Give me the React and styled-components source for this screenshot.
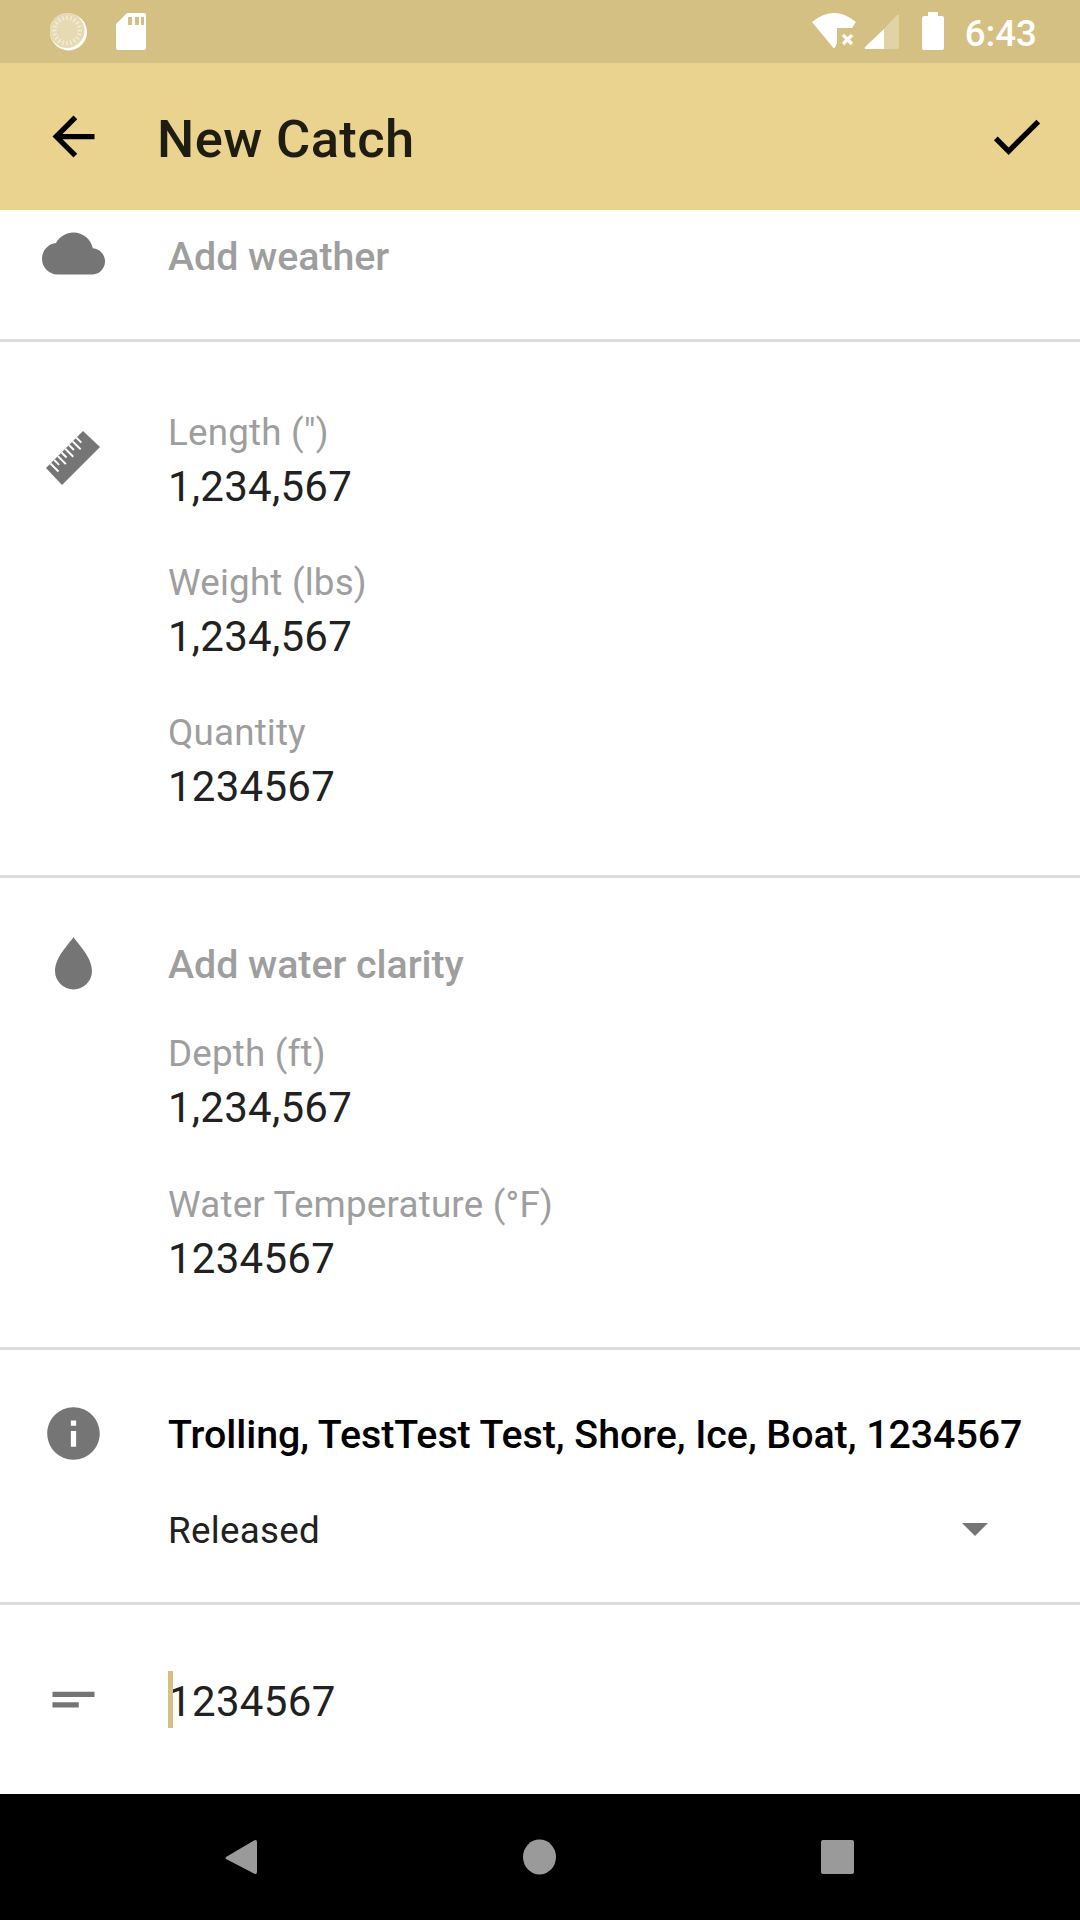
import styled, { createGlobalStyle } from "styled-components"

const GlobalStyle = createGlobalStyle`
    html, body {
        margin: 0;
        padding: 0;
        background: #fff;
    }
`

const Page = styled.div`
    width: 1080px;
    height: 1920px;
    display: flex;
    flex-direction: column;
    overflow: hidden;
    background: #fff;
    font-family: Roboto, "Liberation Sans", sans-serif;
`

const StatusBar = styled.div`
    flex: none;
    height: 63px;
    display: flex;
    justify-content: space-between;
    padding: 0 43px 0 50px;
    background: #d4c083;
`

const StatusGroup = styled.div`
    display: flex;
    align-items: center;
`

const StatusIcon = styled.svg`
    display: block;
    flex: none;
    height: 63px;
    margin-left: ${(props) => props.$gap || 0}px;
`

const Clock = styled.span`
    margin: 3px 0 0 21px;
    font-size: 36.75px;
    font-weight: 500;
    color: #fff;
`

const AppBar = styled.header`
    flex: none;
    height: 147px;
    display: flex;
    align-items: center;
    padding: 0 32px 0 42px;
    background: #ead38f;
`

const Title = styled.h1`
    flex: 1;
    margin: 4px 0 0 52px;
    font-size: 52.5px;
    font-weight: 500;
    letter-spacing: 0.4px;
    color: rgba(0, 0, 0, 0.87);
`

const Icon = styled.svg`
    display: block;
    flex: none;
    width: 63px;
    height: 63px;
    fill: ${(props) => props.$color || "#757575"};
`

const Main = styled.main`
    flex: 1;
    display: flex;
    flex-direction: column;
`

const Section = styled.section`
    display: flex;
    flex: ${(props) => (props.$fill ? 1 : "none")};
    padding-left: 42px;
    border-bottom: ${(props) => (props.$fill ? "none" : "3px solid #dcdcdc")};
`

const IconSlot = styled.div`
    flex: none;
    width: 63px;
    margin-top: ${(props) => props.$top}px;
    margin-right: 63px;
`

const Content = styled.div`
    flex: 1;
    min-width: 0;
    padding-top: ${(props) => props.$top}px;
    padding-bottom: ${(props) => props.$bottom || 0}px;
`

const AddLink = styled.div`
    font-size: 39.375px;
    line-height: 60px;
    font-weight: 500;
    letter-spacing: -0.05px;
    color: #9e9e9e;
`

const Field = styled.div`
    margin-top: ${(props) => props.$gap || 0}px;
`

const Label = styled.div`
    font-size: 36.75px;
    line-height: 48px;
    letter-spacing: 0.2px;
    color: #9e9e9e;
`

const Value = styled.div`
    font-size: 42px;
    line-height: 60px;
    letter-spacing: 0.25px;
    color: #212121;
`

const Species = styled.div`
    font-size: 39.375px;
    line-height: 60px;
    font-weight: 500;
    letter-spacing: -0.05px;
    color: #000;
    white-space: nowrap;
`

const SelectRow = styled.div`
    display: flex;
    align-items: center;
    justify-content: space-between;
    margin-top: 36px;
    padding-right: 92px;
    font-size: 36.75px;
    line-height: 60px;
    letter-spacing: 0.3px;
    color: #212121;
`

const SelectArrow = styled.div`
    width: 0;
    height: 0;
    margin-bottom: 4px;
    border-left: 13px solid transparent;
    border-right: 13px solid transparent;
    border-top: 13px solid #757575;
`

const NoteValue = styled.div`
    position: relative;
    padding-top: 2px;
    font-size: 42px;
    line-height: 57px;
    letter-spacing: 0.35px;
    color: #212121;
`

const Caret = styled.span`
    position: absolute;
    left: 0;
    top: 0;
    width: 5px;
    height: 57px;
    background: #d4c083;
`

const NavBar = styled.nav`
    flex: none;
    height: 126px;
    display: flex;
    align-items: center;
    justify-content: space-between;
    padding: 0 226px 0 225px;
    background: #000;
`

const NavIcon = styled.svg`
    display: block;
    width: 33px;
    height: 36px;
    fill: #9a9a9a;
`

const rulerTicks = [0.12, 0.22, 0.32, 0.42, 0.52, 0.62, 0.72, 0.82]

function RulerIcon() {
    return (
        <Icon viewBox="0 0 63 63">
            <polygon points="41,4 58,20 20,58 4,41" />
            {rulerTicks.map((t, index) => {
                const x = 4 + 37 * t
                const y = 41 - 37 * t
                const len = index % 2 ? 5 : 8
                return <line key={t} x1={x} y1={y} x2={x + len} y2={y + len} stroke="#fff" strokeWidth="2" />
            })}
        </Icon>
    )
}

function SunIcon() {
    const ticks = Array.from({ length: 20 }, (_, index) => index * 18)
    return (
        <StatusIcon width="37" viewBox="0 0 37 63">
            <circle cx="18.5" cy="32" r="18.5" fill="#fff" />
            <circle cx="17" cy="30.5" r="17.5" fill="#e6dab4" />
            {ticks.map((deg) => (
                <line key={deg} x1="17" y1="15.5" x2="17" y2="20" stroke="#f3ecd6" strokeWidth="1.5" transform={`rotate(${deg} 17 30.5)`} />
            ))}
        </StatusIcon>
    )
}

function SdIcon() {
    return (
        <StatusIcon $gap={29} width="30" viewBox="0 0 30 63">
            <path fill="#fff" d="M11 13h17a2 2 0 0 1 2 2v33a2 2 0 0 1-2 2H2a2 2 0 0 1-2-2V24z" />
            <path fill="#d4c083" d="M12 17h4v8h-4zM19 17h4v8h-4zM25 17h3v8h-3z" />
        </StatusIcon>
    )
}

function WifiIcon() {
    return (
        <StatusIcon width="44" viewBox="0 0 44 63">
            <path fill="#fff" d="M0 22Q22 4 44 22L40 28H25V43L23 47.5Q22 48.5 21 47.5z" />
            <path stroke="#fff" strokeWidth="3.2" d="M31 35l9 9M40 35l-9 9" />
        </StatusIcon>
    )
}

function SignalIcon() {
    return (
        <StatusIcon $gap={8} width="36" viewBox="0 0 36 63">
            <path fill="#fff" fillOpacity="0.3" d="M20 29L33 15Q35 13.5 35 16V47Q35 49 33 49H20z" />
            <path fill="#fff" d="M20 29V49H2Q0 49 1 47z" />
        </StatusIcon>
    )
}

function BatteryIcon() {
    return (
        <StatusIcon $gap={22} width="22" viewBox="0 0 22 63">
            <path fill="#fff" d="M6 12h10v4h4a2 2 0 0 1 2 2v30a2 2 0 0 1-2 2H2a2 2 0 0 1-2-2V18a2 2 0 0 1 2-2h4z" />
        </StatusIcon>
    )
}

function App() {
    return (
        <Page>
            <GlobalStyle />
            <StatusBar>
                <StatusGroup>
                    <SunIcon />
                    <SdIcon />
                </StatusGroup>
                <StatusGroup>
                    <WifiIcon />
                    <SignalIcon />
                    <BatteryIcon />
                    <Clock>6:43</Clock>
                </StatusGroup>
            </StatusBar>

            <AppBar>
                <Icon viewBox="0 0 24 24" $color="#000">
                    <path d="M20 11H7.83l5.59-5.59L12 4l-8 8 8 8 1.41-1.41L7.83 13H20v-2z" />
                </Icon>
                <Title>New Catch</Title>
                <Icon viewBox="0 0 24 24" $color="#000">
                    <path d="M9 16.17L4.83 12l-1.42 1.41L9 19 21 7l-1.41-1.41z" />
                </Icon>
            </AppBar>

            <Main>
                <Section>
                    <IconSlot $top={12}>
                        <Icon viewBox="0 0 24 24">
                            <path d="M19.35 10.04C18.67 6.59 15.64 4 12 4 9.11 4 6.6 5.64 5.35 8.04 2.34 8.36 0 10.91 0 14c0 3.31 2.69 6 6 6h13c2.76 0 5-2.24 5-5 0-2.64-2.05-4.78-4.65-4.96z" />
                        </Icon>
                    </IconSlot>
                    <Content $top={17} $bottom={52}>
                        <AddLink>Add weather</AddLink>
                    </Content>
                </Section>

                <Section>
                    <IconSlot $top={85}>
                        <RulerIcon />
                    </IconSlot>
                    <Content $top={67} $bottom={58}>
                        <Field>
                            <Label>Length (")</Label>
                            <Value>1,234,567</Value>
                        </Field>
                        <Field $gap={42}>
                            <Label>Weight (lbs)</Label>
                            <Value>1,234,567</Value>
                        </Field>
                        <Field $gap={42}>
                            <Label>Quantity</Label>
                            <Value>1234567</Value>
                        </Field>
                    </Content>
                </Section>

                <Section>
                    <IconSlot $top={55}>
                        <Icon viewBox="0 0 63 63">
                            <path d="M31.5 4C36 11 50 24 50 38A18.5 18.5 0 0 1 13 38C13 24 27 11 31.5 4Z" />
                        </Icon>
                    </IconSlot>
                    <Content $top={57} $bottom={58}>
                        <AddLink>Add water clarity</AddLink>
                        <Field $gap={35}>
                            <Label>Depth (ft)</Label>
                            <Value>1,234,567</Value>
                        </Field>
                        <Field $gap={43}>
                            <Label>Water Temperature (°F)</Label>
                            <Value>1234567</Value>
                        </Field>
                    </Content>
                </Section>

                <Section>
                    <IconSlot $top={52}>
                        <Icon viewBox="0 0 24 24">
                            <path d="M12 2C6.48 2 2 6.48 2 12s4.48 10 10 10 10-4.48 10-10S17.52 2 12 2zm1 15h-2v-6h2v6zm0-8h-2V7h2v2z" />
                        </Icon>
                    </IconSlot>
                    <Content $top={55} $bottom={41}>
                        <Species>Trolling, TestTest Test, Shore, Ice, Boat, 1234567</Species>
                        <SelectRow>
                            Released
                            <SelectArrow />
                        </SelectRow>
                    </Content>
                </Section>

                <Section $fill>
                    <IconSlot $top={63}>
                        <Icon viewBox="0 0 24 24">
                            <path d="M4 9h16v2H4zm0 4h10v2H4z" />
                        </Icon>
                    </IconSlot>
                    <Content $top={66}>
                        <NoteValue>
                            <Caret />
                            1234567
                        </NoteValue>
                    </Content>
                </Section>
            </Main>

            <NavBar>
                <NavIcon viewBox="0 0 33 36">
                    <path d="M1 18L29 1.5Q32 0 32 3V33Q32 36 29 34.500L1 20Q0 19 1 18z" />
                </NavIcon>
                <NavIcon viewBox="0 0 33 36">
                    <ellipse cx="16.500" cy="18" rx="16.500" ry="17.500" />
                </NavIcon>
                <NavIcon viewBox="0 0 33 36">
                    <rect x="0" y="1" width="33" height="34" rx="2" />
                </NavIcon>
            </NavBar>
        </Page>
    )
}

export default App
